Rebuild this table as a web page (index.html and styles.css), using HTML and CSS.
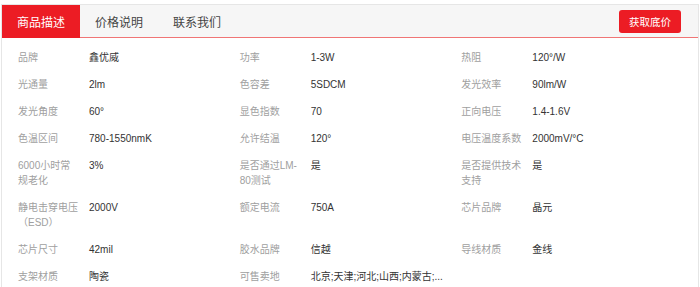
FILE: index.html
```html
<!DOCTYPE html>
<html lang="zh-CN">
<head>
<meta charset="utf-8">
<title>商品描述</title>
<link rel="stylesheet" href="styles.css">
</head>
<body>
<div class="panel">
  <div class="tabbar">
    <div class="tabs">
      <div class="tab active">商品描述</div>
      <div class="tab">价格说明</div>
      <div class="tab">联系我们</div>
    </div>
    <button class="quote">获取底价</button>
  </div>
  <div class="specs">
    <div class="item"><span class="k">品牌</span><span class="v">鑫优威</span></div>
    <div class="item"><span class="k">功率</span><span class="v">1-3W</span></div>
    <div class="item"><span class="k">热阻</span><span class="v">120°/W</span></div>

    <div class="item"><span class="k">光通量</span><span class="v">2lm</span></div>
    <div class="item"><span class="k">色容差</span><span class="v">5SDCM</span></div>
    <div class="item"><span class="k">发光效率</span><span class="v">90lm/W</span></div>

    <div class="item"><span class="k">发光角度</span><span class="v">60°</span></div>
    <div class="item"><span class="k">显色指数</span><span class="v">70</span></div>
    <div class="item"><span class="k">正向电压</span><span class="v">1.4-1.6V</span></div>

    <div class="item"><span class="k">色温区间</span><span class="v">780-1550nmK</span></div>
    <div class="item"><span class="k">允许结温</span><span class="v">120°</span></div>
    <div class="item"><span class="k">电压温度系数</span><span class="v">2000mV/°C</span></div>

    <div class="item"><span class="k">6000小时常规老化</span><span class="v">3%</span></div>
    <div class="item"><span class="k">是否通过LM-80测试</span><span class="v">是</span></div>
    <div class="item"><span class="k">是否提供技术支持</span><span class="v">是</span></div>

    <div class="item"><span class="k">静电击穿电压（ESD）</span><span class="v">2000V</span></div>
    <div class="item"><span class="k">额定电流</span><span class="v">750A</span></div>
    <div class="item"><span class="k">芯片品牌</span><span class="v">晶元</span></div>

    <div class="item"><span class="k">芯片尺寸</span><span class="v">42mil</span></div>
    <div class="item"><span class="k">胶水品牌</span><span class="v">信越</span></div>
    <div class="item"><span class="k">导线材质</span><span class="v">金线</span></div>

    <div class="item"><span class="k">支架材质</span><span class="v">陶瓷</span></div>
    <div class="item"><span class="k">可售卖地</span><span class="v">北京;天津;河北;山西;内蒙古;...</span></div>
  </div>
</div>
</body>
</html>
```

FILE: styles.css
```css
html, body {
  margin: 0;
  padding: 0;
  background: #fff;
}

body {
  font-family: "Liberation Sans", "Noto Sans CJK SC", sans-serif;
}

.panel {
  margin: 4px 0 0 1px;
  width: 698px;
  box-sizing: border-box;
  border: 1px solid #e6e6e6;
  border-bottom: none;
  min-height: 290px;
}

.tabbar {
  display: flex;
  align-items: center;
  justify-content: space-between;
  height: 32px;
  background: #f6f6f6;
  border-bottom: 1px solid #f07575;
}

.tabs {
  display: flex;
  height: 100%;
}

.tab {
  width: 78px;
  display: flex;
  align-items: center;
  justify-content: center;
  font-size: 12px;
  color: #444;
}

.tab.active {
  background: #ec1c24;
  color: #fff;
  height: 33px;
  align-self: flex-start;
}

.quote {
  margin-right: 17px;
  margin-top: 1px;
  width: 62px;
  height: 23px;
  border: none;
  border-radius: 3px;
  background: #ec1c24;
  color: #fff;
  font-family: inherit;
  font-size: 10.5px;
  padding: 0;
}

.specs {
  display: grid;
  grid-template-columns: repeat(3, 1fr);
  row-gap: 12px;
  padding: 12px 15px 0 16px;
  font-size: 10px;
  line-height: 15px;
}

.item {
  display: flex;
  gap: 10px;
}

.k {
  width: 61px;
  flex: none;
  color: #a0a0a0;
}

.v {
  color: #333;
}
```
